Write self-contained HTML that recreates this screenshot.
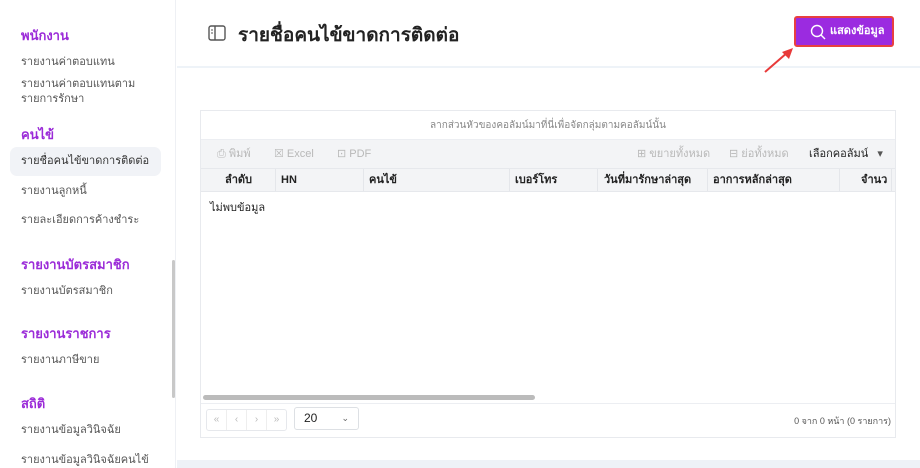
<!DOCTYPE html>
<html><head><meta charset="utf-8"><style>
*{box-sizing:border-box;margin:0;padding:0}
body{width:920px;height:468px;overflow:hidden;background:#fff;font-family:"Liberation Sans","Noto Sans CJK SC",sans-serif;position:relative;color:#222}
.sb{position:absolute;left:0;top:0;width:176px;height:468px;background:#fff;border-right:1px solid #eef0f4}
.sb .h{position:absolute;left:21px;font-size:13px;font-weight:bold;color:#9b2bd8}
.sb .i{position:absolute;left:21px;font-size:11px;color:#555;line-height:15px}
.sel{position:absolute;left:10px;top:147px;width:151px;height:29px;background:#f1f3f7;border-radius:7px}
.scr{position:absolute;left:172px;top:260px;width:3px;height:138px;background:#c8c8c8;border-radius:2px}
.hdr{position:absolute;left:177px;top:0;right:0;height:68px;border-bottom:2px solid #eef3f8}
.title{position:absolute;left:238px;top:20px;font-size:19px;font-weight:bold;color:#222}
.btn{position:absolute;left:794px;top:16px;width:100px;height:31px;background:#9b2be0;border:2px solid #e84040;border-radius:3px;color:#fff;font-size:11px;font-weight:bold;line-height:27px;padding-left:34px}
.tbl{position:absolute;left:200px;top:110px;width:696px;height:328px;border:1px solid #e8eaee}
.grp{height:29px;text-align:center;font-size:10px;color:#888;line-height:29px;border-bottom:1px solid #eceef2}
.tool{height:28px;background:#f3f4f6;font-size:11px;color:#b8b8b8;position:relative}
.tool span{position:absolute;top:7px;line-height:14px;white-space:nowrap}
.th{height:24px;background:#f3f4f6;border-top:1px solid #e6e8ec;border-bottom:1px solid #e6e8ec;position:relative;font-size:11px;font-weight:bold;color:#222}
.th span{position:absolute;top:4px;line-height:15px;white-space:nowrap}
.th i{position:absolute;top:0;width:1px;height:22px;background:#e4e6ea}
.bot{position:absolute;left:0;right:0;top:292px;height:35px;border-top:1px solid #eceef2}
</style></head><body>
<div class="sb">
<div class="h" style="top:25px">พนักงาน</div>
<div class="i" style="top:55px">รายงานค่าตอบแทน</div>
<div class="i" style="top:77px">รายงานค่าตอบแทนตาม<br>รายการรักษา</div>
<div class="h" style="top:124px">คนไข้</div>
<div class="sel"></div>
<div class="i" style="top:154px;color:#333">รายชื่อคนไข้ขาดการติดต่อ</div>
<div class="i" style="top:184px">รายงานลูกหนี้</div>
<div class="i" style="top:213px">รายละเอียดการค้างชำระ</div>
<div class="h" style="top:254px">รายงานบัตรสมาชิก</div>
<div class="i" style="top:284px">รายงานบัตรสมาชิก</div>
<div class="h" style="top:323px">รายงานราชการ</div>
<div class="i" style="top:353px">รายงานภาษีขาย</div>
<div class="h" style="top:393px">สถิติ</div>
<div class="i" style="top:423px">รายงานข้อมูลวินิจฉัย</div>
<div class="i" style="top:453px">รายงานข้อมูลวินิจฉัยคนไข้</div>
<div class="scr"></div>
</div>
<div class="hdr"></div>
<svg style="position:absolute;left:208px;top:25px" width="18" height="16" viewBox="0 0 18 16"><rect x="1" y="1" width="16" height="14" rx="2" fill="none" stroke="#555" stroke-width="1.4"/><line x1="7" y1="1" x2="7" y2="15" stroke="#555" stroke-width="1.4"/><line x1="3" y1="5" x2="5" y2="5" stroke="#555"/><line x1="3" y1="8" x2="5" y2="8" stroke="#555"/></svg>
<div class="title">รายชื่อคนไข้ขาดการติดต่อ</div>
<div class="btn"><svg style="position:absolute;left:14px;top:6px" width="16" height="16" viewBox="0 0 16 16"><circle cx="7" cy="7" r="5.5" fill="none" stroke="#fff" stroke-width="1.4"/><line x1="11" y1="11" x2="15" y2="15" stroke="#fff" stroke-width="1.4"/></svg>แสดงข้อมูล</div>
<svg style="position:absolute;left:760px;top:46px" width="36" height="30"><line x1="5" y1="26" x2="28" y2="6" stroke="#e83a3a" stroke-width="2"/><polygon points="33,2 22,6 29,13" fill="#e83a3a"/></svg>
<div class="tbl">
<div class="grp">ลากส่วนหัวของคอลัมน์มาที่นี่เพื่อจัดกลุ่มตามคอลัมน์นั้น</div>
<div class="tool">
<span style="left:16px">⎙ พิมพ์</span><span style="left:73px">☒ Excel</span><span style="left:136px">⊡ PDF</span>
<span style="left:436px">⊞ ขยายทั้งหมด</span><span style="left:528px">⊟ ย่อทั้งหมด</span>
<span style="left:608px;color:#222">เลือกคอลัมน์ <span style="position:static;color:#555;margin-left:6px">▾</span></span>
</div>
<div class="th">
<span style="left:24px">ลำดับ</span><i style="left:74px"></i>
<span style="left:80px">HN</span><i style="left:162px"></i>
<span style="left:168px">คนไข้</span><i style="left:308px"></i>
<span style="left:314px">เบอร์โทร</span><i style="left:396px"></i>
<span style="left:403px">วันที่มารักษาล่าสุด</span><i style="left:506px"></i>
<span style="left:512px">อาการหลักล่าสุด</span><i style="left:638px"></i>
<span style="left:660px">จำนว</span><i style="left:690px"></i>
</div>
<div style="font-size:11px;position:absolute;left:9px;top:90px;line-height:15px">ไม่พบข้อมูล</div>
<div style="position:absolute;left:2px;top:284px;width:332px;height:5px;background:#bbb;border-radius:3px"></div>
<div class="bot">
<div style="position:absolute;left:5px;top:5px;width:81px;height:22px;border:1px solid #e6e8ec;border-radius:3px;font-size:10px;color:#bbb;display:flex"><span style="flex:1;text-align:center;line-height:20px;border-right:1px solid #eee">«</span><span style="flex:1;text-align:center;line-height:20px;border-right:1px solid #eee">‹</span><span style="flex:1;text-align:center;line-height:20px;border-right:1px solid #eee">›</span><span style="flex:1;text-align:center;line-height:20px">»</span></div>
<div style="position:absolute;left:93px;top:3px;width:65px;height:23px;border:1px solid #dde0e4;border-radius:3px;font-size:12px;line-height:21px;padding-left:9px">20<span style="position:absolute;right:9px;font-size:9px;color:#666">⌄</span></div>
<div style="position:absolute;right:4px;top:10px;font-size:9px;color:#555">0 จาก 0 หน้า (0 รายการ)</div>
</div>
</div>
<div style="position:absolute;left:177px;top:460px;right:0;height:8px;background:#eef2f7"></div>
</body></html>
